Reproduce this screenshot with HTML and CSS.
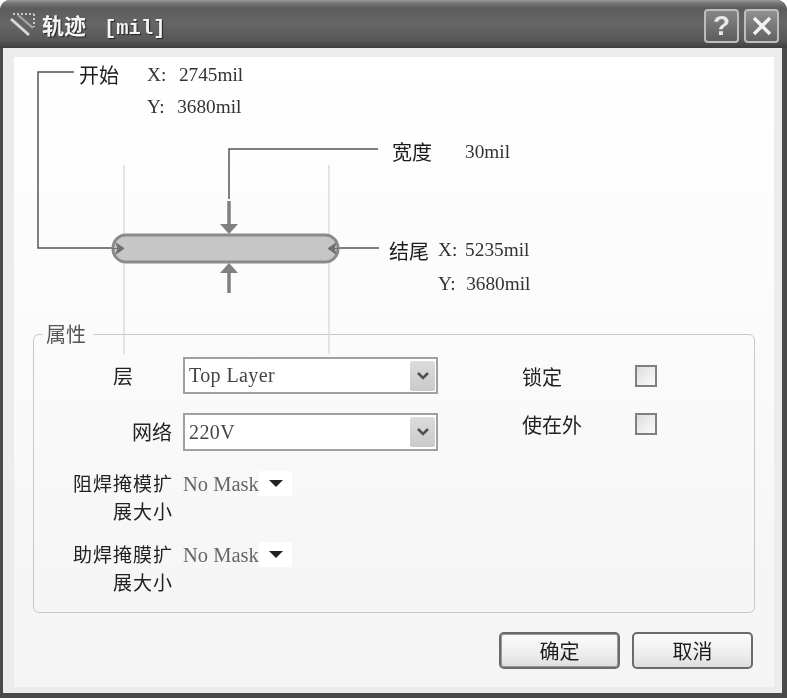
FILE: index.html
```html
<!DOCTYPE html>
<html lang="zh-CN">
<head>
    <meta charset="UTF-8">
    <meta name="viewport" content="width=device-width, initial-scale=1.0">
    <title>轨迹 [mil]</title>
    <link rel="stylesheet" href="styles.css">
</head>
<body>
    <div class="window">
        <div class="titlebar">
            <svg class="title-icon" width="26" height="26" viewBox="0 0 26 26">
                <path d="M3 3H24M24 3V16" stroke="#c8c8c8" stroke-width="2" stroke-dasharray="2 2" fill="none"/>
                <path d="M1 8L19 24" stroke="#d8d8d8" stroke-width="3" fill="none"/>
                <path d="M8 4L23 17" stroke="#a8a8a8" stroke-width="2" fill="none"/>
            </svg>
            <span class="title-text">轨迹<span class="title-unit">[mil]</span></span>
            <div class="title-buttons">
                <button class="title-btn">?</button>
                <button class="title-btn title-close">
                    <svg width="22" height="22" viewBox="0 0 22 22"><path d="M3 3L19 19M19 3L3 19" stroke="#f2f2f2" stroke-width="3.4"/></svg>
                </button>
            </div>
        </div>

        <div class="client">
            <div class="panel">
                <div class="diagram">
                    <svg class="diagram-lines" width="740" height="310" viewBox="0 0 740 310">
                        <!-- coordinates are relative to the panel, x-14 y-57 -->
                        <path d="M110 108V297M315 108V297" stroke="#dcdcdc" stroke-width="1.5" fill="none"/>
                        <path d="M60 15H24V191H98" stroke="#555" stroke-width="1.5" fill="none"/>
                        <path d="M364 92H215V142" stroke="#555" stroke-width="1.5" fill="none"/>
                        <path d="M325 191H365" stroke="#555" stroke-width="1.5" fill="none"/>
                        <rect x="99" y="178" width="225" height="27" rx="13" fill="#c6c6c6" stroke="#8a8a8a" stroke-width="3"/>
                        <path d="M215 144V168" stroke="#808080" stroke-width="3.500"/>
                        <path d="M206 167H224L215 177Z" fill="#808080"/>
                        <path d="M215 236V212" stroke="#808080" stroke-width="3.500"/>
                        <path d="M206 216H224L215 206Z" fill="#808080"/>
                        <path d="M98 191.500H106M102 186L110 191.500L102 197L104 191.500Z" stroke="#707070" fill="#707070"/>
                        <path d="M325 191.500H317M322 186L314 191.500L322 197L320 191.500Z" stroke="#707070" fill="#707070"/>
                    </svg>
                    <span class="note note-start">开始</span>
                    <span class="coord coord-start-x">X:&nbsp; 2745mil</span>
                    <span class="coord coord-start-y">Y:&nbsp; 3680mil</span>
                    <span class="note note-width">宽度</span>
                    <span class="coord coord-width">30mil</span>
                    <span class="note note-end">结尾</span>
                    <span class="coord coord-end-x">X: 5235mil</span>
                    <span class="coord coord-end-y">Y:&nbsp; 3680mil</span>
                </div>

                <fieldset class="props">
                    <legend>属性</legend>
                    <div class="props-body">
                        <div class="props-form">
                            <label class="field-label field-label-short">层</label>
                            <div class="select">
                                <span>Top Layer</span>
                                <span class="select-arrow"><svg width="14" height="10" viewBox="0 0 14 10"><path d="M2 2L7 7L12 2" stroke="#505050" stroke-width="2.600" fill="none"/></svg></span>
                            </div>
                            <label class="field-label">网络</label>
                            <div class="select">
                                <span>220V</span>
                                <span class="select-arrow"><svg width="14" height="10" viewBox="0 0 14 10"><path d="M2 2L7 7L12 2" stroke="#505050" stroke-width="2.600" fill="none"/></svg></span>
                            </div>
                            <label class="field-label field-label-wrap">阻焊掩模扩<br>展大小</label>
                            <div class="mask">
                                <span class="mask-text">No Mask</span>
                                <span class="mask-drop"><i class="caret"></i></span>
                            </div>
                            <label class="field-label field-label-wrap">助焊掩膜扩<br>展大小</label>
                            <div class="mask">
                                <span class="mask-text">No Mask</span>
                                <span class="mask-drop"><i class="caret"></i></span>
                            </div>
                        </div>
                        <div class="props-checks">
                            <div class="check-row"><span>锁定</span><i class="checkbox"></i></div>
                            <div class="check-row"><span>使在外</span><i class="checkbox"></i></div>
                        </div>
                    </div>
                </fieldset>

                <div class="actions">
                    <button class="btn btn-default">确定</button>
                    <button class="btn">取消</button>
                </div>
            </div>
        </div>
    </div>
</body>
</html>
```

FILE: styles.css
```css
* {
    margin: 0;
    padding: 0;
    box-sizing: border-box;
}

body {
    width: 787px;
    height: 698px;
    overflow: hidden;
    background-color: #fff;
    font-family: "Noto Sans CJK SC", "Liberation Sans", sans-serif;
    color: #222;
}

/* the source is a soft scan, so everything is slightly blurred */
.window {
    width: 787px;
    height: 698px;
    display: flex;
    flex-direction: column;
    background-color: #4a4a4a;
    border-radius: 10px 10px 0 0;
    padding: 0 5px 5px 3px;
    filter: blur(0.4px);
}

/* Title bar */
.titlebar {
    height: 48px;
    flex: none;
    margin: 0 -5px 0 -3px;
    padding: 0 8px 0 10px;
    display: flex;
    align-items: center;
    border-radius: 10px 10px 0 0;
    background: linear-gradient(#9a9a9a 0, #777 3px, #5c5c5c 8px, #666 24px, #585858 40px, #3e3e3e 48px);
}

.title-icon {
    flex: none;
    margin-right: 6px;
}

.title-text {
    font-size: 22px;
    font-weight: 700;
    color: #f4f4f4;
    text-shadow: 1px 1px 1px #222;
    white-space: pre;
}

.title-unit {
    margin-left: 18px;
    font-family: "Liberation Mono", monospace;
    font-size: 20.5px;
}

.title-buttons {
    margin-left: auto;
    display: flex;
    gap: 5px;
    margin-top: 4px;
}

.title-btn {
    width: 35px;
    height: 34px;
    display: flex;
    align-items: center;
    justify-content: center;
    border: 2px solid #bdbdbd;
    border-radius: 4px;
    background: linear-gradient(#868686, #5d5d5d);
    color: #e8e8e8;
    font-family: "Liberation Sans", sans-serif;
    font-size: 28px;
    font-weight: 700;
}

.title-close {
    background: linear-gradient(#909090, #626262);
}

/* Client area */
.client {
    flex: 1;
    display: flex;
    background-color: #ececec;
    padding: 9px 8px 6px 11px;
}

.panel {
    flex: 1;
    background: linear-gradient(#ffffff 0, #fbfbfb 270px, #f5f5f5 560px);
    padding: 0 19px 18px 19px;
    display: flex;
    flex-direction: column;
}

.diagram {
    position: relative;
    height: 265px;
    margin: 0 -19px;
    flex: none;
}

.diagram-lines {
    position: absolute;
    left: 0;
    top: 0;
    z-index: 1;
    pointer-events: none;
}

.note,
.coord {
    position: absolute;
    line-height: 24px;
    white-space: nowrap;
}

.note {
    font-size: 20px;
    color: #1c1c1c;
}

.coord {
    font-family: "Liberation Serif", serif;
    font-size: 19.3px;
    word-spacing: 1.5px;
    color: #333;
}

.note-start { left: 65px; top: 6px; }
.coord-start-x { left: 133px; top: 6px; }
.coord-start-y { left: 133px; top: 38px; }
.note-width { left: 378px; top: 83px; }
.coord-width { left: 451px; top: 83px; }
.note-end { left: 375px; top: 182px; }
.coord-end-x { left: 424px; top: 181px; word-spacing: 3px; }
.coord-end-y { left: 424px; top: 215px; word-spacing: 0.5px; }

/* Properties group */
.props {
    height: 291px;
    flex: none;
    border: 1px solid #c8c8c8;
    border-radius: 6px;
}

.props legend {
    margin-left: 8px;
    padding: 0 8px 0 4px;
    font-size: 20px;
    line-height: 24px;
    color: #555;
}

.props-body {
    display: flex;
    padding-top: 11px;
}

.props-form {
    width: 404px;
    display: grid;
    grid-template-columns: 138px 255px;
    column-gap: 11px;
    grid-template-rows: 37px 38px 52px 52px;
    row-gap: 19px;
}

.field-label {
    font-size: 20px;
    line-height: 26px;
    text-align: right;
    color: #222;
    align-self: center;
}

.field-label-short {
    padding-right: 39px;
}

.field-label-wrap {
    align-self: start;
    margin-top: -1px;
    margin-right: -1px;
    font-size: 19px;
    line-height: 28px;
    letter-spacing: 1px;
}

.select {
    display: flex;
    align-items: center;
    justify-content: space-between;
    height: 100%;
    padding: 0 1px 0 4px;
    border: 2px solid #a0a0a0;
    background-color: #fff;
    font-family: "Liberation Serif", serif;
    font-size: 20px;
    letter-spacing: 0.4px;
    color: #444;
}

.select-arrow {
    width: 25px;
    height: 30px;
    display: flex;
    align-items: center;
    justify-content: center;
    background: linear-gradient(#dcdcdc, #cacaca);
    border-radius: 2px;
}

.mask {
    display: flex;
    align-items: flex-start;
    margin-top: 1px;
}

.mask-text {
    width: 76px;
    font-family: "Liberation Serif", serif;
    font-size: 20.5px;
    line-height: 26px;
    color: #666;
    white-space: nowrap;
}

.mask-drop {
    width: 33px;
    height: 25px;
    display: flex;
    align-items: center;
    justify-content: center;
    background-color: #fff;
}

.caret {
    width: 0;
    height: 0;
    border-left: 7px solid transparent;
    border-right: 7px solid transparent;
    border-top: 7px solid #222;
}

.props-checks {
    margin-left: 84px;
    width: 135px;
    display: flex;
    flex-direction: column;
    gap: 26px;
    padding-top: 8px;
}

.check-row {
    display: flex;
    align-items: center;
    justify-content: space-between;
    height: 22px;
    font-size: 20px;
    color: #222;
}

.checkbox {
    width: 22px;
    height: 22px;
    border: 2px solid #808080;
    background: linear-gradient(135deg, #dedede, #fbfbfb);
}

/* Bottom buttons */
.actions {
    display: flex;
    justify-content: flex-end;
    gap: 12px;
    margin-top: 19px;
    margin-right: 2px;
}

.btn {
    width: 121px;
    height: 37px;
    border: 2px solid #6a6a6a;
    border-radius: 5px;
    background: linear-gradient(#fbfbfb, #eeeeee 60%, #dddddd);
    font-family: "Noto Sans CJK SC", sans-serif;
    font-size: 20px;
    color: #1c1c1c;
}

.btn-default {
    box-shadow: inset 0 0 0 1px #9a9a9a;
}
```
